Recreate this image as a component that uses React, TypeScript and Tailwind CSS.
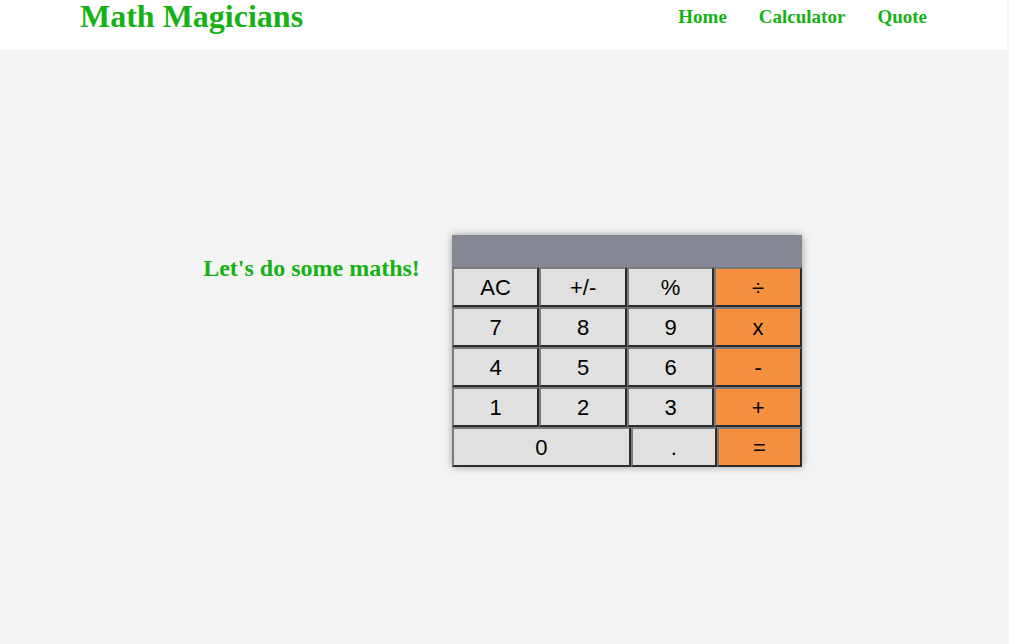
const keys = [
  ["AC", "+/-", "%", "÷"],
  ["7", "8", "9", "x"],
  ["4", "5", "6", "-"],
  ["1", "2", "3", "+"],
];

const btn =
  "h-10 border-2 border-t-[#7a7a7a] border-l-[#7a7a7a] border-r-[#2b2b2b] border-b-[#2b2b2b] text-[22px] text-black flex items-center justify-center";

const App = () => {
  return (
    <div className="min-h-[644px] bg-[#f4f4f4] font-['Liberation_Serif',serif]">
      <header className="w-[1007px] h-[50px] bg-white flex items-start justify-between px-20">
        <h1 className="text-[32px] font-bold leading-[32px] text-[#15b215]">
          Math Magicians
        </h1>
        <nav className="flex gap-8 pt-[3px]">
          <a className="text-[19px] font-bold text-[#15b215]">Home</a>
          <a className="text-[19px] font-bold text-[#15b215]">Calculator</a>
          <a className="text-[19px] font-bold text-[#15b215]">Quote</a>
        </nav>
      </header>

      <main className="w-[1005px] flex justify-center items-start gap-8 pt-[185px]">
        <h2 className="mt-5 text-[24px] font-bold leading-[26px] text-[#15b215]">
          Let's do some maths!
        </h2>

        <div className="w-[350px] shadow-[0_0_8px_rgba(0,0,0,0.35)] font-['Liberation_Sans',sans-serif]">
          <div className="h-8 bg-[#858794]"></div>
          {keys.map((row, i) => (
            <div key={i} className="grid grid-cols-4">
              {row.map((k, j) => (
                <button
                  key={k}
                  className={
                    btn + (j === 3 ? " bg-[#f5913e]" : " bg-[#e0e0e0]")
                  }
                >
                  {k}
                </button>
              ))}
            </div>
          ))}
          <div className="grid grid-cols-[179px_86px_85px]">
            <button className={btn + " bg-[#e0e0e0]"}>0</button>
            <button className={btn + " bg-[#e0e0e0]"}>.</button>
            <button className={btn + " bg-[#f5913e]"}>=</button>
          </div>
        </div>
      </main>
    </div>
  );
};

export default App;
